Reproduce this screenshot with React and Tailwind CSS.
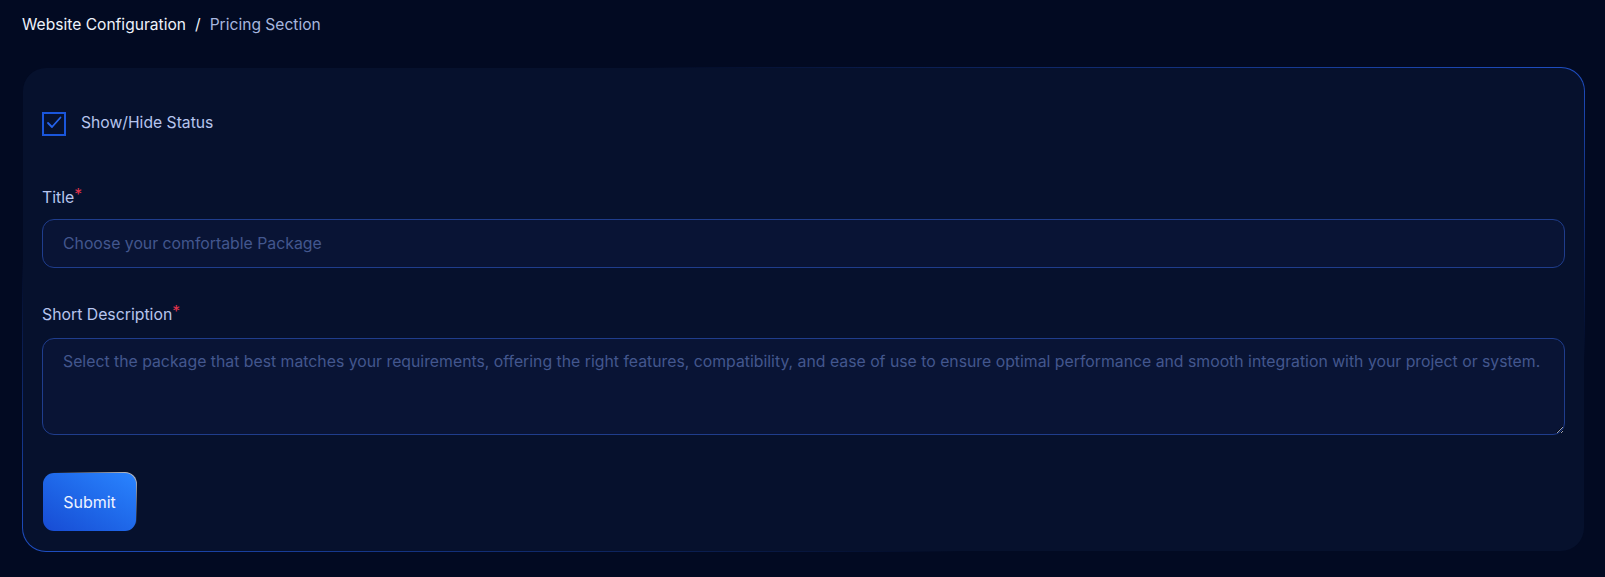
import React from "react";

export default function App() {
  return (
    <div
      className="min-h-screen w-full bg-[#020a22] pl-[22px] pr-5 pt-3 pb-6"
      style={{ fontFamily: "Inter, 'Noto Sans', 'Liberation Sans', sans-serif" }}
    >
      <div className="flex items-center pt-px text-[15.6px] leading-6">
        <span className="text-[#eef2fb]">Website Configuration</span>
        <span className="mx-[9px] text-[#eef2fb]">/</span>
        <span className="text-[#a7b6df]">Pricing Section</span>
      </div>

      <div className="mt-[30px] rounded-3xl bg-linear-to-br from-transparent from-20% via-[#1f4fc4] via-50% to-transparent to-80% p-px">
        <div className="flex flex-col rounded-[23px] bg-[#06112d] px-[19px] pt-[44px] pb-[19px]">
          <label className="flex h-6 items-center gap-[15px]">
            <span className="flex h-6 w-6 items-center justify-center border-2 border-[#1a56db]">
              <svg width="24" height="24" viewBox="0 0 24 24" className="-m-[2px]">
                <path
                  d="M6 11 L10 15 L18.5 5.5"
                  fill="none"
                  stroke="#2563eb"
                  strokeWidth="1.8"
                  strokeLinecap="round"
                  strokeLinejoin="round"
                />
              </svg>
            </span>
            <span className="-mt-[3px] text-[15.7px] leading-6 text-[#b7c5ee]">Show/Hide Status</span>
          </label>

          <div className="mt-[50px] mb-[9px] h-6 text-[15.8px] leading-6 text-[#b7c5ee]">
            Title<span className="align-[3px] leading-[0] text-[#e3344c]">*</span>
          </div>
          <input
            type="text"
            placeholder="Choose your comfortable Package"
            className="h-[49px] w-full rounded-xl border border-[#1f3d8c] bg-[#091435] px-5 text-[15.8px] text-[#c9d4f3] outline-none placeholder:text-[#43578e]"
          />

          <div className="mt-[35px] mb-[11px] h-6 text-[15.8px] leading-6 text-[#b7c5ee]">
            Short Description<span className="align-[3px] leading-[0] text-[#e3344c]">*</span>
          </div>
          <textarea
            placeholder="Select the package that best matches your requirements, offering the right features, compatibility, and ease of use to ensure optimal performance and smooth integration with your project or system."
            className="block h-[97px] w-full rounded-xl border border-[#1f3d8c] bg-[#091435] px-5 pt-[11px] text-[15.8px] leading-6 text-[#c9d4f3] outline-none placeholder:text-[#43578e]"
          />

          <div className="mt-[37px]">
            <div className="inline-block rounded-xl bg-linear-to-tr from-transparent from-55% to-white/80 p-px">
              <button className="flex h-[58px] w-[93px] items-center justify-center rounded-[11px] bg-linear-to-tr from-[#184bd3] to-[#2a84ff] text-[16px] text-[#eef3ff]">
                Submit
              </button>
            </div>
          </div>
        </div>
      </div>
    </div>
  );
}
